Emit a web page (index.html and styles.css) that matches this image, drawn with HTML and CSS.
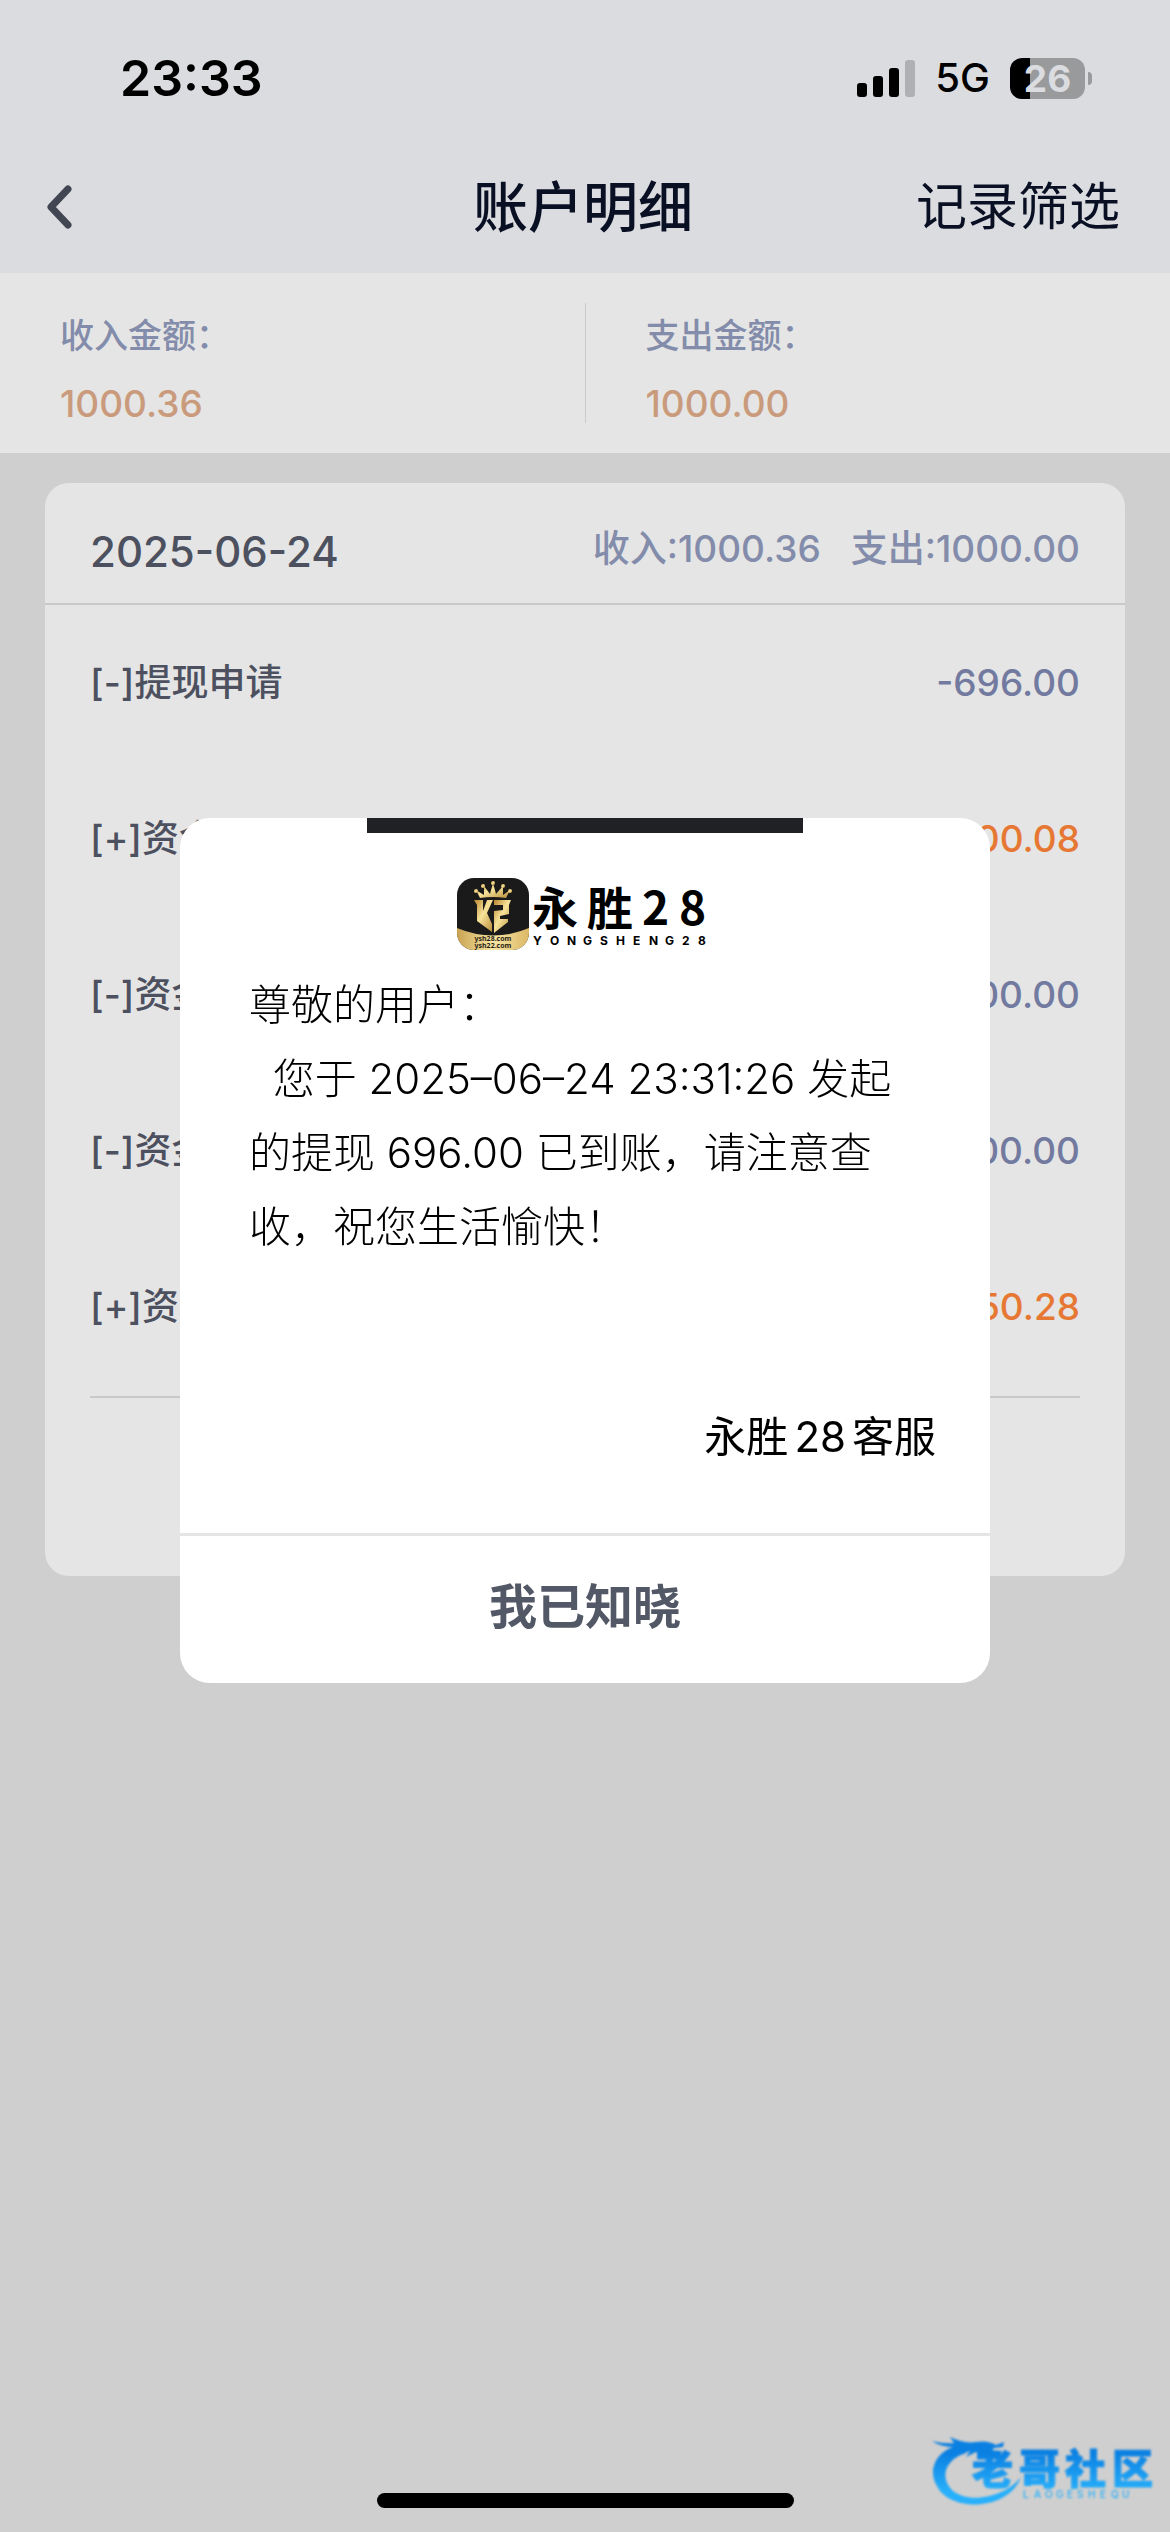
FILE: index.html
```html
<!DOCTYPE html>
<html lang="zh-CN">
<head>
    <meta charset="UTF-8">
    <meta name="viewport" content="width=device-width, initial-scale=1.0">
    <title>账户明细</title>
    <link rel="stylesheet" href="styles.css">
</head>
<body>

    <!-- Status bar + nav -->
    <header class="header">
        <div class="status">
            <span class="time">23:33</span>
            <div class="status-right">
                <svg class="signal" viewBox="0 0 58 37" aria-hidden="true">
                    <rect x="0" y="23" width="10" height="14" rx="3"/>
                    <rect x="16" y="16" width="10" height="21" rx="3"/>
                    <rect x="32" y="8" width="10" height="29" rx="3"/>
                    <rect x="48" y="0" width="10" height="37" rx="3" fill="#afb0b3"/>
                </svg>
                <span class="network">5G</span>
                <div class="battery">
                    <span class="battery-body">26</span>
                    <span class="battery-tip"></span>
                </div>
            </div>
        </div>
        <nav class="nav">
            <button class="back" aria-label="返回">
                <svg viewBox="0 0 26 44" aria-hidden="true">
                    <path d="M22 4 L5 22 L22 40"/>
                </svg>
            </button>
            <h1>账户明细</h1>
            <button class="filter">记录筛选</button>
        </nav>
    </header>

    <main>
        <section class="summary">
            <div class="summary-item">
                <span class="label">收入金额：</span>
                <span class="amount">1000.36</span>
            </div>
            <div class="summary-item">
                <span class="label">支出金额：</span>
                <span class="amount">1000.00</span>
            </div>
        </section>

        <section class="card">
            <div class="card-head">
                <h2>2025-06-24</h2>
                <div class="totals">
                    <span>收入:1000.36</span>
                    <span>支出:1000.00</span>
                </div>
            </div>
            <ul class="list">
                <li><span>[-]提现申请</span><span class="out">-696.00</span></li>
                <li><span>[+]资金</span><span class="in">+1000.08</span></li>
                <li><span>[-]资金</span><span class="out">-1000.00</span></li>
                <li><span>[-]资金</span><span class="out">-1000.00</span></li>
                <li><span>[+]资金</span><span class="in">+50.28</span></li>
            </ul>
        </section>
    </main>

    <!-- Notice -->
    <div class="overlay">
        <div class="modal" role="dialog" aria-label="提现通知">
            <div class="modal-bar"></div>
            <svg class="logo" viewBox="0 0 256 72" role="img" aria-label="永胜28">
                <defs>
                    <linearGradient id="gold" x1="0" y1="0" x2="1" y2="1">
                        <stop offset="0" stop-color="#b8862e"/>
                        <stop offset="0.45" stop-color="#f8e39a"/>
                        <stop offset="1" stop-color="#b58a35"/>
                    </linearGradient>
                    <linearGradient id="base" x1="0" y1="0" x2="1" y2="0">
                        <stop offset="0" stop-color="#c9a352"/>
                        <stop offset="0.5" stop-color="#f6e6a4"/>
                        <stop offset="1" stop-color="#dcb866"/>
                    </linearGradient>
                    <clipPath id="tile"><rect width="72" height="72" rx="17"/></clipPath>
                </defs>
                <g clip-path="url(#tile)">
                    <rect width="72" height="72" fill="#1b1a1a"/>
                    <path d="M0 50 Q36 65 72 50 V72 H0 Z" fill="url(#base)"/>
                    <g fill="url(#gold)">
                        <path d="M23 20 L19 12 L27 17 L27 8 L33 16 L36 5 L39 16 L46 8 L46 17 L53 12 L49 20 Q36 18 23 20 Z"/>
                        <circle cx="36" cy="5" r="2"/>
                        <circle cx="26" cy="8" r="2"/>
                        <circle cx="46" cy="8" r="2"/>
                        <circle cx="19" cy="13" r="2"/>
                        <circle cx="53" cy="13" r="2"/>
                        <path d="M17 22 H26 V33 L30 22 H36 L30 35 L35 46 V54 L20 43 V27 Z"/>
                        <path d="M37 22 H54 L52 27 V36 L43 38 V41 H51 V44 L37 55 V33 L46 32 V27 H37 Z"/>
                    </g>
                    <text class="logo-url" x="36" y="63" text-anchor="middle">ysh28.com</text>
                    <text class="logo-url" x="36" y="70" text-anchor="middle">ysh22.com</text>
                </g>
                <text class="logo-name" x="75 130 185 222" y="47">永胜28</text>
                <text class="logo-sub" x="76 93 110 126 143 159 176 192 208 225 241" y="67">YONGSHENG28</text>
            </svg>
            <div class="message">
                <p>尊敬的用户：</p>
                <p>&nbsp; 您于 2025–06–24 23:31:26 发起的提现 696.00 已到账，请注意查收，祝您生活愉快！</p>
            </div>
            <p class="sign"><span>永胜</span><span>28</span><span>客服</span></p>
            <button class="confirm">我已知晓</button>
        </div>
    </div>

    <svg class="watermark" viewBox="0 0 260 112" role="img" aria-label="老哥社区">
        <defs>
            <linearGradient id="blue" gradientUnits="userSpaceOnUse" x1="0" y1="20" x2="0" y2="84">
                <stop offset="0.2" stop-color="#0a80e2"/>
                <stop offset="0.8" stop-color="#27b0fb"/>
            </linearGradient>
        </defs>
        <g fill="url(#blue)">
            <path d="M46 26 C22 33 19 54 27 66 C39 92 98 92 111 57 C98 75 60 86 42 70 C30 58 34 40 56 33 Z"/>
            <path d="M22 21 Q34 24 44 23 L40 17 Q54 24 66 22 Q78 20 86 25 L94 22 L93 27 L84 28 L79 30 L92 31 L90 35 L80 33 L72 36 L66 32 L56 37 L60 31 L50 35 L44 27 Q31 27 22 21 Z"/>
            <text class="wm-name" x="62 109 155 202" y="64">老哥社区</text>
            <text class="wm-sub" x="113 124 135 146 157 167 178 190 201 212" y="78">LAOGESHEQU</text>
        </g>
    </svg>
    <div class="home-bar"></div>

</body>
</html>
```

FILE: styles.css
```css
* {
    box-sizing: border-box;
    margin: 0;
    padding: 0;
}

body {
    min-height: 100vh;
    font-family: Inter, "Noto Sans CJK SC", sans-serif;
    font-size: 37px;
    font-weight: 500;
    line-height: 1.25;
    color: #4d515f;
    background: #cfcfcf;
}

button {
    font: inherit;
    color: inherit;
    background: none;
    border: none;
    cursor: pointer;
}

/* Header */
.header {
    background: #dbdce0;
}

.status {
    display: flex;
    justify-content: space-between;
    align-items: center;
    height: 141px;
    padding: 15px 78px 0 120px;
    color: #000;
}

.time {
    font-size: 50px;
    font-weight: 600;
}

.status-right {
    display: flex;
    align-items: center;
    gap: 20px;
}

.signal {
    width: 58px;
    height: 37px;
}

.network {
    font-size: 40px;
}

.battery {
    display: flex;
    align-items: center;
    gap: 3px;
}

.battery-body {
    width: 75px;
    height: 41px;
    border-radius: 12px;
    background: linear-gradient(to right, #000 20px, #999a9c 20px);
    color: #dbdce0;
    font-size: 37px;
    font-weight: 700;
    line-height: 41px;
    text-align: center;
}

.battery-tip {
    width: 4px;
    height: 13px;
    border-radius: 0 4px 4px 0;
    background: #999a9c;
}

.nav {
    display: grid;
    grid-template-columns: 1fr auto 1fr;
    align-items: center;
    height: 132px;
    padding: 0 50px 0 46px;
    color: #0a1024;
}

.nav h1 {
    font-size: 55px;
    font-weight: 500;
}

.back {
    justify-self: start;
    display: flex;
}

.back svg {
    width: 26px;
    height: 44px;
    fill: none;
    stroke: #424653;
    stroke-width: 7;
    stroke-linecap: round;
    stroke-linejoin: round;
}

.filter {
    justify-self: end;
    font-size: 51px;
    font-weight: 400;
}

/* Summary */
.summary {
    display: flex;
    padding: 30px 0;
    background: #e5e5e5;
}

.summary-item {
    flex: 1;
    display: flex;
    flex-direction: column;
    gap: 20px;
    height: 120px;
    padding: 9px 60px 0;
}

.summary-item + .summary-item {
    border-left: 1px solid #cbcbcb;
}

.label {
    font-size: 34px;
    line-height: 48px;
    color: #838caa;
}

.amount {
    line-height: 48px;
    color: #c99b7c;
}

/* Card */
.card {
    margin: 30px 45px;
    padding-bottom: 178px;
    border-radius: 24px;
    background: #e5e5e5;
}

.card-head {
    display: flex;
    justify-content: space-between;
    align-items: center;
    height: 122px;
    padding: 12px 45px 0;
    border-bottom: 2px solid #c9c9c9;
}

.card-head h2 {
    padding-top: 6px;
    font-size: 42px;
    font-weight: 500;
}

.totals {
    display: flex;
    gap: 30px;
    color: #838caa;
}

.list {
    margin: 0 45px;
    padding-bottom: 11px;
    border-bottom: 2px solid #c9c9c9;
    list-style: none;
}

.list li {
    display: flex;
    justify-content: space-between;
    align-items: center;
    height: 156px;
}

.out {
    color: #727aa0;
}

.in {
    color: #e67833;
}

/* Modal */
.overlay {
    position: fixed;
    inset: 0;
    display: flex;
    justify-content: center;
    align-items: center;
    padding: 0 180px 32px;
}

.modal {
    flex: 1;
    display: flex;
    flex-direction: column;
    border-radius: 30px;
    background: #fff;
    color: #000;
    overflow: hidden;
}

.modal-bar {
    align-self: center;
    width: 436px;
    height: 15px;
    background: #202125;
}

.logo {
    align-self: center;
    width: 256px;
    height: 72px;
    margin-top: 45px;
}

.logo-url {
    font-family: "Noto Sans", sans-serif;
    font-size: 7px;
    font-weight: 700;
    fill: #2a2212;
}

.logo-name {
    font-family: "Noto Sans CJK SC", sans-serif;
    font-size: 46px;
    font-weight: 700;
}

.logo-sub {
    font-size: 12px;
    font-weight: 700;
}

.message {
    margin-top: 18px;
    padding: 0 69px;
    font-size: 42px;
    font-weight: 300;
    line-height: 74px;
}

.sign {
    display: flex;
    justify-content: flex-end;
    gap: 6px;
    margin-top: 136px;
    padding: 0 54px;
    font-size: 42px;
    font-weight: 400;
    line-height: 74px;
}

.confirm {
    height: 150px;
    margin-top: 59px;
    padding-bottom: 4px;
    border-top: 3px solid #e5e5e5;
    font-size: 48px;
    font-weight: 700;
    color: #525866;
}

/* Watermark and home indicator */
.watermark {
    position: fixed;
    right: 0;
    bottom: 0;
    width: 260px;
    height: 112px;
    filter: blur(1px);
}

.wm-name {
    font-size: 41px;
    font-weight: 900;
    stroke: url(#blue);
    stroke-width: 1;
}

.wm-sub {
    font-size: 10px;
}

.home-bar {
    position: fixed;
    left: 50%;
    bottom: 24px;
    width: 417px;
    height: 15px;
    margin-left: -208px;
    border-radius: 8px;
    background: #000;
}
```
